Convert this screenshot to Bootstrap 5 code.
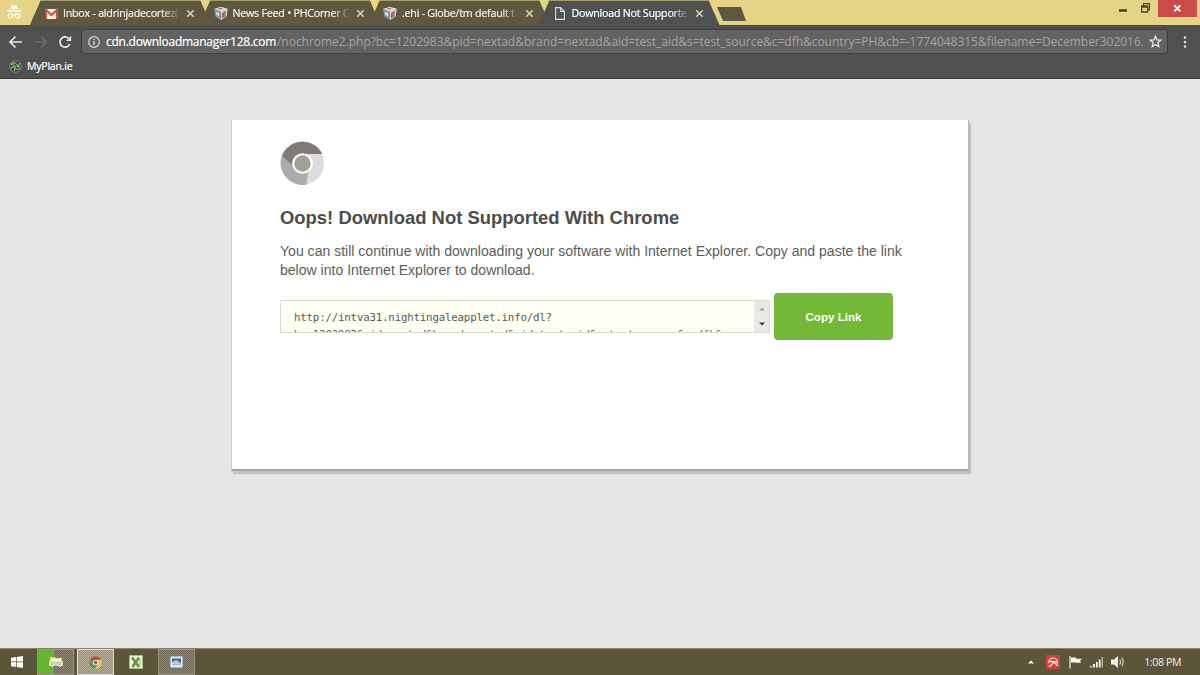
<!DOCTYPE html>
<html lang="en">

<head>
    <meta charset="UTF-8">
    <meta name="viewport" content="width=device-width, initial-scale=1.0">
    <title>Download Not Supported</title>
    <link href="https://cdn.jsdelivr.net/npm/bootstrap@5.3.0/dist/css/bootstrap.min.css" rel="stylesheet">
    <style>
        body {
            height: 675px;
            background: #e6e6e6;
            font-family: "Open Sans", "Noto Sans", sans-serif;
            font-size: 10.7px;
            line-height: 1;
        }
        svg {
            display: block;
            flex-shrink: 0;
        }

        /* title bar and tabs */
        .title-bar {
            height: 25px;
            background: #e3d585;
        }
        .incognito {
            width: 30px;
            padding: 4px 0 0 7px;
        }
        .tab-item {
            width: 181px;
            height: 25px;
            margin-right: -11.5px;
            padding: 0 0 0 15px;
            background: #5d593f repeating-conic-gradient(#555139 0 25%, #656147 0 50%) 0 0 / 2px 2px;
            border-top: 1px solid #a59d6c;
            color: #f4f3e8;
            clip-path: polygon(0 100%, 11px 0, 170px 0, 181px 100%);
        }
        .tab-item.current {
            background: #505050;
            color: #fff;
            z-index: 1;
        }
        .tab-text {
            width: 119px;
            margin-left: 5px;
            white-space: nowrap;
            line-height: 16px;
            letter-spacing: -.24px;
            -webkit-text-stroke: .2px;
            -webkit-mask-image: linear-gradient(90deg, #000 84%, transparent 99%);
            mask-image: linear-gradient(90deg, #000 84%, transparent 99%);
        }
        .new-tab {
            width: 29px;
            height: 14px;
            margin: 7px 0 0 9px;
            background: #5d593f;
            clip-path: polygon(0 0, 24px 0, 100% 100%, 6px 100%);
            z-index: 2;
        }
        .close-btn {
            width: 39px;
            height: 17px;
            background: #cb4b4a;
        }

        /* toolbar */
        .tool-bar {
            height: 54px;
            background: #505050;
            border-bottom: 1px solid #3c3c3c;
        }
        .nav-row {
            height: 25px;
            margin-top: 4px;
            padding-left: 8px;
        }
        .address {
            width: 1087px;
            height: 25px;
            background: #626262;
            border: 1px solid #3e3e3e;
            border-radius: 3px;
            padding-left: 6px;
            color: #a6a59e;
            font-size: 12px;
        }
        .url-text {
            width: 1040px;
            margin-left: 6px;
            white-space: nowrap;
            line-height: 20px;
        }
        .url-host {
            display: inline-block;
            width: 171px;
            color: #fff;
            letter-spacing: -.26px;
            -webkit-text-stroke: .2px;
        }
        .url-path {
            letter-spacing: -.03px;
        }
        .bookmark {
            height: 24px;
            padding-left: 9px;
            color: #fff;
            font-size: 10.5px;
            letter-spacing: -.2px;
            -webkit-text-stroke: .2px;
        }

        /* message box */
        .notice {
            width: 738px;
            height: 351px;
            margin-top: 41px;
            padding: 21px 48px 0;
            background: #fff;
            border-style: solid;
            border-width: 0 1px 2px 1px;
            border-color: #d8d8d8 #abb9b6 #a5a89f #c6caca;
            box-shadow: 2px 3px 1px #bfc2c0;
            font-family: "Liberation Sans", Arial, sans-serif;
        }
        .notice h1 {
            margin: 22px 0 0;
            font-size: 18.45px;
            font-weight: bold;
            line-height: 22px;
            color: #4d4d48;
            white-space: nowrap;
        }
        .notice p {
            margin: 13px 0 0;
            font-size: 14.06px;
            line-height: 19px;
            color: #5d5d57;
            white-space: nowrap;
        }
        .link-box {
            width: 490px;
            height: 33px;
            margin-top: 7px;
            background: #fffff4;
            border: 1px solid #dcdccb;
            overflow: hidden;
        }
        .link-text {
            padding: 8px 0 0 13px;
            font-family: "DejaVu Sans Mono", "Liberation Mono", monospace;
            font-size: 10.8px;
            letter-spacing: -.21px;
            line-height: 17px;
            color: #595954;
            white-space: pre;
        }
        .scroll-strip {
            width: 15px;
            background: #e9e9e5;
        }
        .btn-copy,
        .btn-copy:hover {
            width: 119px;
            height: 47px;
            padding: 0;
            background: #74b837;
            border: 0;
            border-radius: 4px;
            color: #fff;
            font-size: 11.6px;
            font-weight: bold;
        }

        /* taskbar */
        .task-bar {
            height: 27px;
            background: #5b5539;
            border-top: 1px solid #888371;
            color: #f3f2ea;
        }
        .task-btn {
            width: 37px;
            height: 26px;
            border: 1px solid #999482;
            background: repeating-conic-gradient(#6f6956 0 25%, #8b8574 0 50%) 0 0 / 2px 2px;
        }
        .task-btn.progress-half {
            background: linear-gradient(90deg, #66b532 47%, transparent 47%), repeating-conic-gradient(#6f6956 0 25%, #8b8574 0 50%) 0 0 / 2px 2px;
        }
        .task-btn.focused {
            background: repeating-conic-gradient(#98917e 0 25%, #b4ad9a 0 50%) 0 0 / 2px 2px;
            border-color: #dedbd0;
        }
    </style>
</head>

<body class="d-flex flex-column overflow-hidden">
    <svg width="0" height="0" class="position-absolute">
        <defs>
            <symbol id="closeX" viewBox="0 0 9 9">
                <path d="M1.2 1.2l6.500 6.500M7.700 1.200l-6.500 6.500" stroke="#dcdacb" stroke-width="1.4" />
            </symbol>
            <symbol id="cube" viewBox="0 0 16 16">
                <path d="M1 3L8 1l7 2-1 8-6 4-6-4z" fill="#a9b6c2" />
                <path d="M1 3L8 1l7 2-7 3z" fill="#dce2e4" />
                <path d="M1 3l7 3v9l-6-4z" fill="#8298b2" />
                <path d="M8 6l7-3-1 8-6 4z" fill="#c9ced0" />
                <path d="M4 3l4-1 2 1-3 1z" fill="#c65b4b" />
                <path d="M3 6l3 2v3L3 9z" fill="#e8e7df" />
                <path d="M9 8l4-3v3l-3 2 3-1v2l-4 2z" fill="#c94d43" />
            </symbol>
        </defs>
    </svg>

    <!-- tabs -->
    <div class="title-bar d-flex align-items-start">
        <div class="incognito">
            <svg width="14" height="15" viewBox="0 0 14 15" fill="none" stroke="#fffdf0">
                <path d="M3.3 5L4.5.8 7 1.5 9.5.8 10.7 5z" fill="#fffdf0" stroke="none" />
                <path d="M0 6.8h14" stroke-width="1.6" />
                <circle cx="3.4" cy="11.8" r="2.2" stroke-width="1.2" />
                <circle cx="10.6" cy="11.8" r="2.2" stroke-width="1.2" />
                <path d="M5.5 11.3q1.5-.9 3 0" />
            </svg>
        </div>
        <div class="tab-item d-flex align-items-center">
            <svg width="13" height="11" viewBox="0 0 13 11">
                <path d="M0 1h13v10H0z" fill="#f1eee8" />
                <path d="M1 11V1.8L6.5 7 12 1.8V11" fill="none" stroke="#d34b3f" stroke-width="2" />
            </svg>
            <div class="tab-text">Inbox - aldrinjadecortez(</div>
            <svg width="9" height="9" class="ms-1"><use href="#closeX" /></svg>
        </div>
        <div class="tab-item d-flex align-items-center">
            <svg width="16" height="15" style="margin-left:-2px"><use href="#cube" /></svg>
            <div class="tab-text" style="margin-left:4px">News Feed • PHCorner C</div>
            <svg width="9" height="9" class="ms-1"><use href="#closeX" /></svg>
        </div>
        <div class="tab-item d-flex align-items-center">
            <svg width="16" height="15" style="margin-left:-2px"><use href="#cube" /></svg>
            <div class="tab-text" style="margin-left:4px">.ehi - Globe/tm default t</div>
            <svg width="9" height="9" class="ms-1"><use href="#closeX" /></svg>
        </div>
        <div class="tab-item current d-flex align-items-center">
            <svg width="10" height="13" viewBox="0 0 10 13" fill="none" stroke="#deded8" stroke-width="1.1" style="margin-left:1px">
                <path d="M.6.6h5L9.4 4.4v8H.6zM5.6.6v3.8h3.8" />
            </svg>
            <div class="tab-text" style="margin-left:7px">Download Not Supporte</div>
            <svg width="9" height="9" class="ms-1"><use href="#closeX" /></svg>
        </div>
        <div class="new-tab"></div>
        <div class="ms-auto d-flex align-items-start">
            <svg width="8" height="12" class="me-2"><path d="M0 10.5h8" stroke="#3d3928" stroke-width="2.4" /></svg>
            <svg width="9" height="13" viewBox="0 0 9 13" style="margin:0 8px 0 6px" fill="none" stroke="#4b4630" stroke-width="1.3">
                <path d="M.7 6h6v6h-6zM.7 7h6M2.5 6V3.7h6v6H6.7" />
            </svg>
            <div class="close-btn d-flex justify-content-center align-items-center">
                <svg width="9" height="9" viewBox="0 0 9 9"><path d="M1.3 1.3l6 6M7.3 1.3l-6 6" stroke="#fff" stroke-width="1.9" /></svg>
            </div>
            <div style="width:3px"></div>
        </div>
    </div>

    <!-- address bar and bookmarks -->
    <div class="tool-bar">
        <div class="nav-row d-flex align-items-center">
            <svg width="73" height="16" viewBox="0 0 73 16" fill="none" stroke="#e9e9e9" stroke-width="1.7">
                <path d="M14 8H2.5M7.5 2.5L2 8l5.5 5.5" />
                <path d="M26.5 8H38M33 2.5L38.5 8 33 13.5" stroke="#6b6b6b" />
                <path d="M61.8 10A5.1 5.1 0 1 1 60.5 4.2" />
                <path d="M63.2 1.8v5.2h-5.2z" fill="#e9e9e9" stroke="none" />
            </svg>
            <div class="address d-flex align-items-center">
                <svg width="12" height="12" viewBox="0 0 12 12" fill="none" stroke="#dcdcdc" stroke-width="1.2">
                    <circle cx="6" cy="6" r="5.3" />
                    <path d="M6 5.2v3.8M6 2.800v1.400" stroke-width="1.4" />
                </svg>
                <div class="url-text"><span class="url-host">cdn.downloadmanager128.com</span><span class="url-path">/nochrome2.php?bc=1202983&amp;pid=nextad&amp;brand=nextad&amp;aid=test_aid&amp;s=test_source&amp;c=dfh&amp;country=PH&amp;cb=-1774048315&amp;filename=December302016.</span></div>
                <svg width="13" height="13" viewBox="0 0 13 13" style="margin-left:3px">
                    <path d="M6.5 1.2l1.500 3.600 3.900.3-3 2.500.9 3.900-3.300-2.100-3.300 2.100.9-3.900-3-2.500 3.900-.3z" fill="none" stroke="#e8e8e8" stroke-width="1.3" />
                </svg>
            </div>
            <svg width="4" height="12" viewBox="0 0 4 12" fill="#e4e4e4" style="margin-left:15px">
                <circle cx="2" cy="1.5" r="1.3" />
                <circle cx="2" cy="6" r="1.3" />
                <circle cx="2" cy="10.5" r="1.3" />
            </svg>
        </div>
        <div class="bookmark d-flex align-items-center">
            <svg width="13" height="13" viewBox="0 0 13 13" fill="none">
                <circle cx="6.5" cy="6.5" r="5.8" fill="#363f36" stroke="#8d9a8c" stroke-width=".8" />
                <path d="M2 5q3-4 5-1t4-1M2 9q2-4 4-1t5 0M5 11q1-3 2-5" stroke="#76c04f" stroke-width="1.3" />
                <path d="M3 3.5l3 3M8 6l3 1" stroke="#b8d9c1" />
            </svg>
            <span style="margin-left:5px">MyPlan.ie</span>
        </div>
    </div>

    <!-- page content -->
    <div class="notice mx-auto">
        <svg width="44" height="44" viewBox="0 0 44 44">
            <circle cx="22" cy="22" r="22" fill="#dcdcda" />
            <path d="M2.5 14A22 22 0 0 0 26 43.700L29 28 15 27z" fill="#aaacac" />
            <path d="M2 15A22 22 0 0 1 42.300 13H22L12 24z" fill="#7e7b77" />
            <circle cx="22.5" cy="22.5" r="10.3" fill="#fff" />
            <circle cx="22.5" cy="22.5" r="8.2" fill="#a39f95" />
        </svg>
        <h1>Oops! Download Not Supported With Chrome</h1>
        <p>You can still continue with downloading your software with Internet Explorer. Copy and paste the link<br>below into Internet Explorer to download.</p>
        <div class="d-flex align-items-start" style="margin-top:13px">
            <div class="link-box d-flex">
                <div class="link-text flex-grow-1">http://intva31.nightingaleapplet.info/dl?
bc=1202983&amp;pid=nextad&amp;brand=nextad&amp;aid=test_aid&amp;s=test_source&amp;c=dfh&amp;</div>
                <div class="scroll-strip d-flex flex-column align-items-center justify-content-around">
                    <svg width="6" height="4"><path d="M0 3.5h6L3 .5z" fill="#a0a098" /></svg>
                    <svg width="6" height="4"><path d="M0 .5h6L3 3.5z" fill="#383834" /></svg>
                </div>
            </div>
            <button type="button" class="btn btn-copy ms-1">Copy Link</button>
        </div>
    </div>

    <!-- taskbar -->
    <div class="task-bar d-flex align-items-center mt-auto">
        <svg width="12" height="12" viewBox="0 0 12 12" fill="#fff" style="margin:0 14px 0 11px">
            <path d="M0 1.7l5-.7v4.6H0zM5.7.9L12 0v5.6H5.7zM0 6.3h5v4.6l-5-.7zM5.7 6.3H12V12l-6.3-.9z" />
        </svg>
        <div class="task-btn progress-half d-flex align-items-center justify-content-center">
            <svg width="16" height="14" viewBox="0 0 16 14">
                <path d="M2 2h5l1 1h6v7H2z" fill="#e9d98c" />
                <path d="M3 4h10v2H3z" fill="#fff8d2" />
                <path d="M1 6h14v5H1z" fill="#e7dba2" />
                <path d="M4 12V8.5h8V12" fill="none" stroke="#b7d4df" stroke-width="2" />
            </svg>
        </div>
        <div class="task-btn focused d-flex align-items-center justify-content-center" style="margin-left:3px">
            <svg width="13" height="13" viewBox="0 0 13 13">
                <circle cx="6.5" cy="6.5" r="6.3" fill="#e3c555" />
                <path d="M1 3.5A6.3 6.3 0 0 1 12 3.6L6.5 4 4 8z" fill="#ce4237" />
                <path d="M1 3.5A6.3 6.3 0 0 0 6 12.8L8.5 8 4 8z" fill="#4f9f45" />
                <circle cx="6.5" cy="6.5" r="2.8" fill="#e8eef2" />
                <circle cx="6.5" cy="6.5" r="2" fill="#5383b8" />
            </svg>
        </div>
        <svg width="14" height="14" viewBox="0 0 14 14" style="margin:0 15px">
            <path d="M.5.5h13v13H.5z" fill="#f0f3e2" stroke="#a1bd79" />
            <path d="M3 2.5l7 9.5M10 2.5L3.5 12" stroke="#5c9735" stroke-width="2.5" />
            <path d="M11 4v7" stroke="#86b460" />
        </svg>
        <div class="task-btn d-flex align-items-center justify-content-center">
            <svg width="13" height="12" viewBox="0 0 13 12">
                <rect x=".5" y=".5" width="12" height="11" rx="1" fill="#dde5ea" stroke="#a9bed0" />
                <path d="M2 2.5h9v6H2z" fill="#476988" />
                <path d="M2 6l4-2 5 3v1.5H2z" fill="#b7cad7" />
            </svg>
        </div>
        <div class="ms-auto d-flex align-items-center">
            <svg width="6" height="4"><path d="M0 3.5h6L3 .3z" fill="#f1f0e8" /></svg>
            <svg width="14" height="14" viewBox="0 0 14 14" style="margin:0 9px 0 12px">
                <path d="M0 0h14v14H0z" fill="#cf403c" />
                <path d="M2.500 7.500Q3.500 2.800 8 3q3.500 1 3.500 5Q9.500 6.500 7.500 7 5 5.500 2.500 7.500z" fill="none" stroke="#ffeede" stroke-width="1.1" />
                <path d="M8 6L5 10.500q-1.200 1.200-2.300.3M8 7.500l4 3.500" fill="none" stroke="#ffeede" stroke-width="1.2" />
            </svg>
            <svg width="14" height="14" viewBox="0 0 14 14">
                <path d="M1 1v12.5" stroke="#f1f0e8" stroke-width="1.3" />
                <path d="M2 2.5h5v1.3h6l-2 2 1 2H7V7.5H2z" fill="#f8f7f0" />
            </svg>
            <svg width="14" height="12" viewBox="0 0 14 12" fill="#f1f0e8" style="margin-left:7px">
                <path d="M0 10h2v1.5H0zM3 8h2v3.5H3zM6 6h1.8v5.5H6zM8.8 3.5h1.8v8H8.8z" />
                <path d="M11.6 1h1.4v10.5h-1.4z" fill="#b9b5a4" />
            </svg>
            <svg width="14" height="14" viewBox="0 0 14 14" style="margin-left:7px">
                <path d="M0 4.5h3L7 1v12L3 9.5H0z" fill="#f1f0e8" />
                <path d="M8.7 4.5q1.6 2.5 0 5M10.8 2.8q2.7 4.2 0 8.4" fill="none" stroke="#e1dfd2" stroke-width="1.1" />
            </svg>
            <span style="margin:0 19px 0 19px;font-size:10.5px;letter-spacing:-.35px">1:08 PM</span>
        </div>
    </div>

    <script src="https://cdn.jsdelivr.net/npm/bootstrap@5.3.0/dist/js/bootstrap.bundle.min.js"></script>
</body>

</html>
